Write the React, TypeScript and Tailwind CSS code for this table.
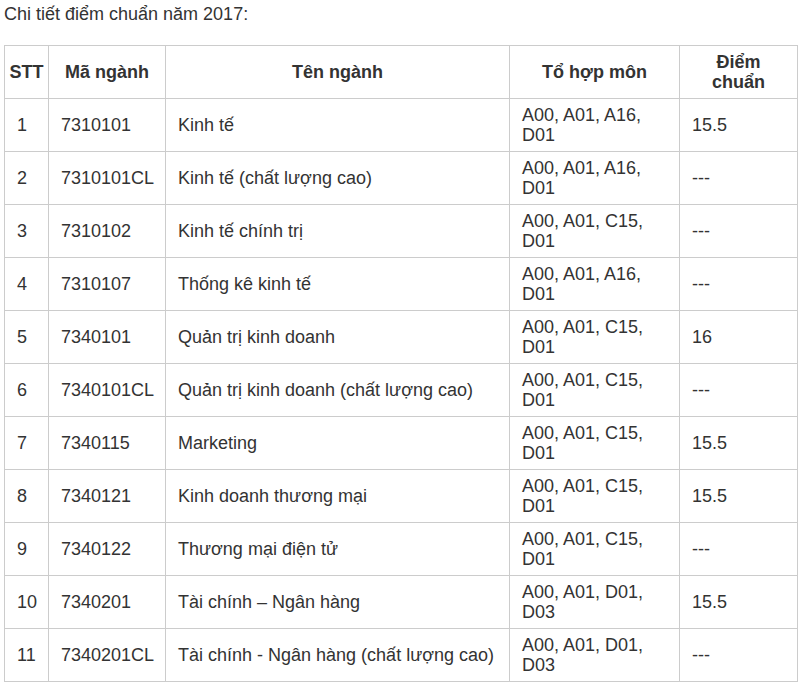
const rows = [
  ["1", "7310101", "Kinh tế", "A00, A01, A16, D01", "15.5"],
  ["2", "7310101CL", "Kinh tế (chất lượng cao)", "A00, A01, A16, D01", "---"],
  ["3", "7310102", "Kinh tế chính trị", "A00, A01, C15, D01", "---"],
  ["4", "7310107", "Thống kê kinh tế", "A00, A01, A16, D01", "---"],
  ["5", "7340101", "Quản trị kinh doanh", "A00, A01, C15, D01", "16"],
  ["6", "7340101CL", "Quản trị kinh doanh (chất lượng cao)", "A00, A01, C15, D01", "---"],
  ["7", "7340115", "Marketing", "A00, A01, C15, D01", "15.5"],
  ["8", "7340121", "Kinh doanh thương mại", "A00, A01, C15, D01", "15.5"],
  ["9", "7340122", "Thương mại điện tử", "A00, A01, C15, D01", "---"],
  ["10", "7340201", "Tài chính – Ngân hàng", "A00, A01, D01, D03", "15.5"],
  ["11", "7340201CL", "Tài chính - Ngân hàng (chất lượng cao)", "A00, A01, D01, D03", "---"],
];

const App = () => {
  return (
    <div className="min-h-[684px] bg-white px-[4px] text-[18px] leading-[20px] text-[#333] font-['Liberation_Sans',Arial,sans-serif]">
      <p className="pt-[4px]">Chi tiết điểm chuẩn năm 2017:</p>
      <table className="mt-[21px] w-[794px] table-fixed border-collapse">
        <colgroup>
          <col className="w-[44px]" />
          <col className="w-[117px]" />
          <col className="w-[344px]" />
          <col className="w-[170px]" />
          <col className="w-[118px]" />
        </colgroup>
        <thead>
          <tr>
            {["STT", "Mã ngành", "Tên ngành", "Tổ hợp môn", "Điểm chuẩn"].map((h, i) => (
              <th
                key={h}
                className={
                  "h-[53px] border border-[#cccccc] py-[6px] text-center font-bold " +
                  (i === 0 ? "px-[2px]" : "px-[12px]")
                }
              >
                {h}
              </th>
            ))}
          </tr>
        </thead>
        <tbody>
          {rows.map((r) => (
            <tr key={r[0]}>
              {r.map((c, i) => (
                <td
                  key={i}
                  className="h-[53px] border border-[#cccccc] px-[12px] py-[6px] text-left align-middle"
                >
                  {c}
                </td>
              ))}
            </tr>
          ))}
        </tbody>
      </table>
    </div>
  );
};

export default App;
